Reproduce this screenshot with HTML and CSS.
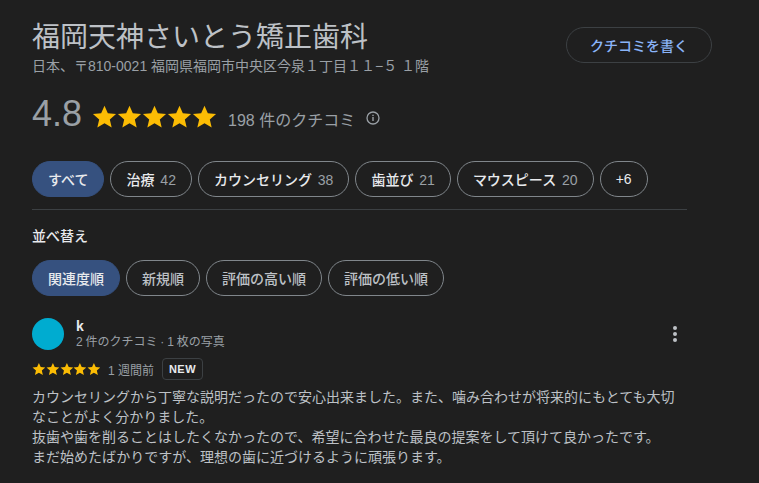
FILE: index.html
```html
<!DOCTYPE html>
<html lang="ja">
<head>
    <meta charset="UTF-8">
    <meta name="viewport" content="width=device-width, initial-scale=1.0">
    <title>クチコミ</title>
    <link rel="stylesheet" href="styles.css">
</head>
<body>
    <svg class="defs" width="0" height="0">
        <symbol id="star" viewBox="0 0 24 24">
            <path d="M12 1.6l3.2 7.3 7.9.7-6 5.2 1.8 7.8L12 18.500l-6.900 4.100 1.800-7.800-6-5.200 7.900-.7z"/>
        </symbol>
    </svg>

    <header class="cabecera">
        <div>
            <h1>福岡天神さいとう矯正歯科</h1>
            <p class="direccion">日本、〒810-0021 福岡県福岡市中央区今泉１丁目１１−５ １階</p>
        </div>
        <button class="escribir">クチコミを書く</button>
    </header>

    <div class="puntuacion">
        <span class="nota">4.8</span>
        <span class="estrellas">
            <svg><use href="#star"/></svg><svg><use href="#star"/></svg><svg><use href="#star"/></svg><svg><use href="#star"/></svg><svg><use href="#star"/></svg>
        </span>
        <span class="total">198 件のクチコミ</span>
        <svg class="info" viewBox="0 0 16 16">
            <circle cx="8" cy="8" r="6" fill="none" stroke="currentColor" stroke-width="1.300"/>
            <rect x="7.300" y="7" width="1.400" height="4"/>
            <rect x="7.300" y="4.700" width="1.400" height="1.400"/>
        </svg>
    </div>

    <div class="chips">
        <button class="chip activo">すべて</button>
        <button class="chip">治療 <span class="cuenta">42</span></button>
        <button class="chip">カウンセリング <span class="cuenta">38</span></button>
        <button class="chip">歯並び <span class="cuenta">21</span></button>
        <button class="chip">マウスピース <span class="cuenta">20</span></button>
        <button class="chip">+6</button>
    </div>

    <hr class="separador">

    <h2>並べ替え</h2>

    <div class="chips">
        <button class="chip activo">関連度順</button>
        <button class="chip gris">新規順</button>
        <button class="chip gris">評価の高い順</button>
        <button class="chip gris">評価の低い順</button>
    </div>

    <article class="resena">
        <div class="autor">
            <div class="avatar"></div>
            <div class="datos">
                <div class="nombre">k</div>
                <div class="detalle">2 件のクチコミ · 1 枚の写真</div>
            </div>
            <div class="menu"><i></i><i></i><i></i></div>
        </div>
        <div class="meta">
            <span class="estrellas-mini">
                <svg><use href="#star"/></svg><svg><use href="#star"/></svg><svg><use href="#star"/></svg><svg><use href="#star"/></svg><svg><use href="#star"/></svg>
            </span>
            <span class="fecha">1 週間前</span>
            <span class="nuevo">NEW</span>
        </div>
        <p class="texto">カウンセリングから丁寧な説明だったので安心出来ました。また、噛み合わせが将来的にもとても大切なことがよく分かりました。<br>抜歯や歯を削ることはしたくなかったので、希望に合わせた最良の提案をして頂けて良かったです。<br>まだ始めたばかりですが、理想の歯に近づけるように頑張ります。</p>
    </article>
</body>
</html>
```

FILE: styles.css
```css
body {
    margin: 0;
    padding: 20px 47px 0 32px;
    height: 463px;
    overflow: hidden;
    background-color: #1f1f1f;
    color: #bdc1c6;
    font-family: "Liberation Sans", "Noto Sans CJK JP", sans-serif;
}

.defs {
    position: absolute;
}

.cabecera {
    display: flex;
    justify-content: space-between;
    align-items: flex-start;
}

h1 {
    margin: 0;
    font-size: 28px;
    font-weight: 400;
    line-height: 36px;
    color: #bdc1c6;
}

.direccion {
    margin: 0;
    font-size: 14px;
    line-height: 20px;
    color: #9aa0a6;
}

.escribir {
    width: 146px;
    height: 36px;
    margin-top: 7px;
    padding: 0;
    font-family: inherit;
    font-size: 14px;
    font-weight: 500;
    color: #8ab4f8;
    background: none;
    border: 1px solid #3c4043;
    border-radius: 18px;
}

.puntuacion {
    display: flex;
    align-items: center;
    height: 44px;
    margin-top: 16px;
}

.nota {
    width: 60px;
    font-size: 36px;
    color: #9aa0a6;
}

.estrellas {
    display: flex;
    margin-top: 4px;
}

.estrellas svg {
    width: 25px;
    height: 25px;
    fill: #fbbc04;
}

.total {
    margin-left: 11px;
    margin-top: 10px;
    font-size: 16px;
    color: #9aa0a6;
}

.info {
    width: 16px;
    height: 16px;
    margin-left: 10px;
    margin-top: 8px;
    color: #9aa0a6;
    fill: currentColor;
}

.chips {
    display: flex;
    gap: 6px;
}

.puntuacion + .chips {
    margin-top: 25px;
}

.chip {
    height: 36px;
    padding: 0 15px;
    font-family: inherit;
    font-size: 14px;
    font-weight: 500;
    color: #e8eaed;
    background: none;
    border: 1px solid #80868b;
    border-radius: 18px;
    white-space: nowrap;
}

.chip.gris {
    color: #bdc1c6;
}

.chip.activo {
    color: #e8eaed;
    background-color: #36517f;
    border-color: #36517f;
}

.cuenta {
    margin-left: 2px;
    font-weight: 400;
    color: #9aa0a6;
}

.separador {
    width: 655px;
    height: 1px;
    margin: 12px 0 0;
    background-color: #3c4043;
    border: none;
}

h2 {
    margin: 16px 0 14px;
    font-size: 14px;
    font-weight: 500;
    line-height: 20px;
    color: #e8eaed;
}

.resena {
    margin-top: 22px;
    width: 648px;
}

.autor {
    display: flex;
    align-items: center;
}

.avatar {
    width: 32px;
    height: 32px;
    border-radius: 50%;
    background-color: #00acd0;
}

.datos {
    flex: 1;
    margin-left: 12px;
}

.nombre {
    font-size: 14px;
    font-weight: 700;
    line-height: 16px;
    color: #e8eaed;
}

.detalle {
    font-size: 12px;
    line-height: 16px;
    word-spacing: -0.500px;
    color: #9aa0a6;
}

.menu {
    display: flex;
    flex-direction: column;
    gap: 2px;
    margin-right: 3px;
}

.menu i {
    width: 4px;
    height: 4px;
    border-radius: 50%;
    background-color: #bdc1c6;
}

.meta {
    display: flex;
    align-items: center;
    height: 22px;
    margin-top: 8px;
}

.estrellas-mini {
    display: flex;
}

.estrellas-mini svg {
    width: 13.800px;
    height: 13.800px;
    fill: #fbbc04;
}

.fecha {
    margin-left: 7px;
    font-size: 12px;
    color: #9aa0a6;
}

.nuevo {
    box-sizing: border-box;
    width: 41px;
    height: 22px;
    margin-left: 8px;
    font-size: 11px;
    font-weight: 700;
    line-height: 20px;
    letter-spacing: 0.500px;
    text-align: center;
    color: #e8eaed;
    border: 1px solid #3c4043;
    border-radius: 4px;
}

.texto {
    margin: 7px 0 0;
    font-size: 14px;
    line-height: 20px;
    color: #bdc1c6;
}
```
